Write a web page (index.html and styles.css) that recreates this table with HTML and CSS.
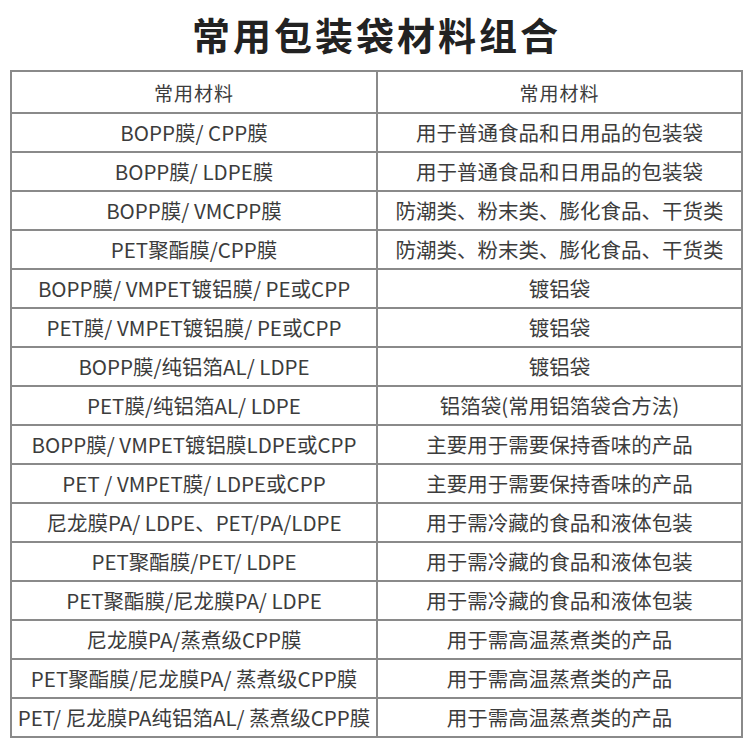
FILE: index.html
```html
<!DOCTYPE html>
<html lang="zh">
<head>
<meta charset="utf-8">
<link rel="stylesheet" href="styles.css">
</head>
<body>
<h1 class="title">常用包装袋材料组合</h1>
<table class="mat">
<tr class="head"><td>常用材料</td><td>常用材料</td></tr>
<tr><td>BOPP膜/ CPP膜</td><td>用于普通食品和日用品的包装袋</td></tr>
<tr><td>BOPP膜/ LDPE膜</td><td>用于普通食品和日用品的包装袋</td></tr>
<tr><td>BOPP膜/ VMCPP膜</td><td>防潮类、粉末类、膨化食品、干货类</td></tr>
<tr><td>PET聚酯膜/CPP膜</td><td>防潮类、粉末类、膨化食品、干货类</td></tr>
<tr><td>BOPP膜/ VMPET镀铝膜/ PE或CPP</td><td>镀铝袋</td></tr>
<tr><td>PET膜/ VMPET镀铝膜/ PE或CPP</td><td>镀铝袋</td></tr>
<tr><td>BOPP膜/纯铝箔AL/ LDPE</td><td>镀铝袋</td></tr>
<tr><td>PET膜/纯铝箔AL/ LDPE</td><td>铝箔袋(常用铝箔袋合方法)</td></tr>
<tr><td>BOPP膜/ VMPET镀铝膜LDPE或CPP</td><td>主要用于需要保持香味的产品</td></tr>
<tr><td>PET / VMPET膜/ LDPE或CPP</td><td>主要用于需要保持香味的产品</td></tr>
<tr><td>尼龙膜PA/ LDPE、PET/PA/LDPE</td><td>用于需冷藏的食品和液体包装</td></tr>
<tr><td>PET聚酯膜/PET/ LDPE</td><td>用于需冷藏的食品和液体包装</td></tr>
<tr><td>PET聚酯膜/尼龙膜PA/ LDPE</td><td>用于需冷藏的食品和液体包装</td></tr>
<tr><td>尼龙膜PA/蒸煮级CPP膜</td><td>用于需高温蒸煮类的产品</td></tr>
<tr><td>PET聚酯膜/尼龙膜PA/ 蒸煮级CPP膜</td><td>用于需高温蒸煮类的产品</td></tr>
<tr><td>PET/ 尼龙膜PA纯铝箔AL/ 蒸煮级CPP膜</td><td>用于需高温蒸煮类的产品</td></tr>
</table>
</body>
</html>
```

FILE: styles.css
```css
html, body {
  margin: 0;
  padding: 0;
  background: #fff;
}
body {
  width: 750px;
  font-family: "Noto Sans CJK SC", "Noto Sans", sans-serif;
  color: #3c3c3c;
}
.title {
  margin: 0;
  height: 70px;
  line-height: 68px;
  text-align: center;
  font-size: 38px;
  font-weight: 700;
  letter-spacing: 3px;
  padding-left: 3px;
  color: #222;
}
.mat {
  margin-left: 10px;
  width: 733px;
  border-collapse: collapse;
  table-layout: fixed;
}
.mat td {
  border: 2px solid #8a8a8a;
  text-align: center;
  vertical-align: middle;
  font-size: 20.5px;
  letter-spacing: 0;
  padding: 0;
  white-space: nowrap;
  height: 37px;
  line-height: 1;
}
.mat td:first-child {
  width: 364px;
}
.mat .head td {
  height: 40px;
  font-size: 19px;
  letter-spacing: 1px;
}
```
